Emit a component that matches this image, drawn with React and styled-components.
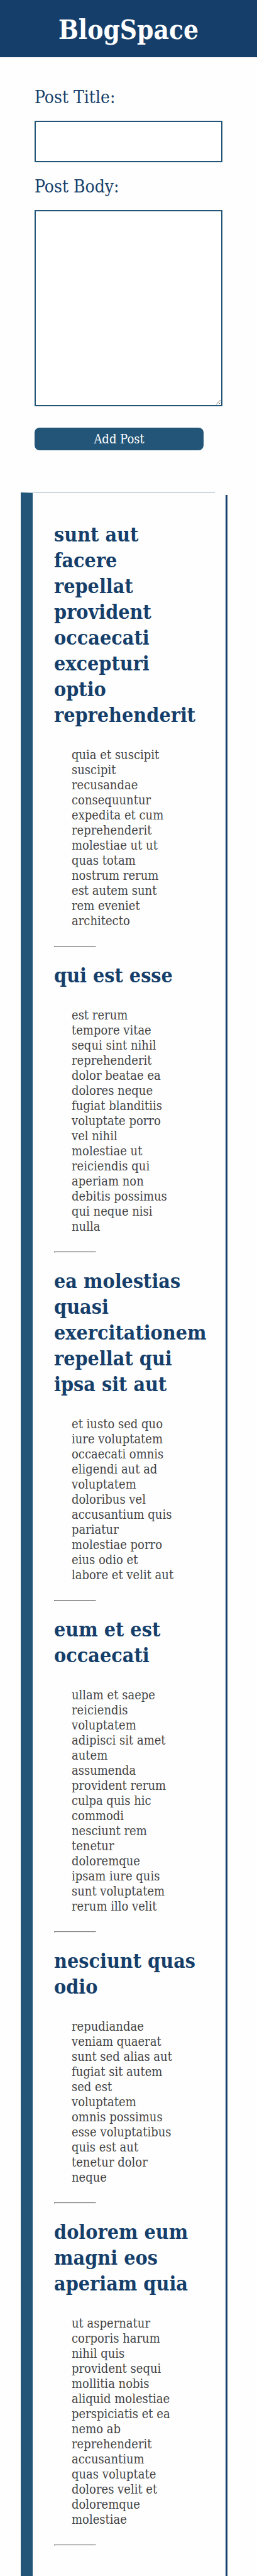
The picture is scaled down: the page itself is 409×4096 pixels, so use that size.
import React from 'react';
import styled, { createGlobalStyle } from 'styled-components';

const GlobalStyle = createGlobalStyle`
  *, *::before, *::after { box-sizing: border-box; }
  body {
    margin: 0;
    background: #fefefe;
    color: #444;
    font-family: "DejaVu Serif Condensed", "DejaVu Serif", serif;
    font-stretch: condensed;
  }
`;

const Header = styled.header`
  display: flex;
  justify-content: center;
  padding: 20px 16px 15px;
  background: #153f6a;
`;

const Brand = styled.h1`
  margin: 0;
  color: #fff;
  font-size: 42px;
  line-height: 56px;
  font-weight: 700;
`;

const PostForm = styled.form`
  display: flex;
  flex-direction: column;
  padding: 46px 55px 0;
`;

const Label = styled.label`
  margin-bottom: 19px;
  color: #153f6a;
  font-size: 28px;
  line-height: 36px;
`;

const TitleInput = styled.input`
  height: 66px;
  margin: 0 0 21px;
  padding: 8px;
  border: 2px solid #225577;
  background: #fff;
  font: inherit;
`;

const BodyInput = styled.textarea`
  height: 312px;
  margin: 0 0 34px;
  padding: 8px;
  border: 2px solid #225577;
  background: #fff;
  font: inherit;
`;

const SubmitButton = styled.button`
  width: 90%;
  height: 36px;
  padding: 0;
  border: 0;
  border-radius: 8px;
  background: #225577;
  color: #fff;
  font-family: inherit;
  font-stretch: inherit;
  font-size: 20px;
  line-height: 24px;
`;

const Main = styled.main`
  display: flex;
  justify-content: space-between;
  margin: 67px 47px 0 33px;
`;

const Feed = styled.section`
  width: 94%;
  padding: 46px 0 23px 34px;
  border-top: 1px solid #a9bfce;
  border-left: 19px solid #225577;
`;

const Rail = styled.div`
  width: 3px;
  margin-top: 4px;
  background: #153f6a;
`;

const PostTitle = styled.h2`
  margin: 0;
  color: #153f6a;
  font-size: 32px;
  line-height: 41px;
  font-weight: 700;
  white-space: pre;
`;

const PostBody = styled.p`
  margin: 30px 0 28px 28px;
  font-size: 20px;
  line-height: 24px;
  white-space: pre;
`;

const Divider = styled.hr`
  width: 67px;
  margin: 0 0 25px;
  border: 1px inset #b4b4b4;
  border-bottom-color: #eee;
  border-right-color: #eee;
`;

const posts = [
  {
    title: 'sunt aut\nfacere\nrepellat\nprovident\noccaecati\nexcepturi\noptio\nreprehenderit',
    body: 'quia et suscipit\nsuscipit\nrecusandae\nconsequuntur\nexpedita et cum\nreprehenderit\nmolestiae ut ut\nquas totam\nnostrum rerum\nest autem sunt\nrem eveniet\narchitecto',
  },
  {
    title: 'qui est esse',
    body: 'est rerum\ntempore vitae\nsequi sint nihil\nreprehenderit\ndolor beatae ea\ndolores neque\nfugiat blanditiis\nvoluptate porro\nvel nihil\nmolestiae ut\nreiciendis qui\naperiam non\ndebitis possimus\nqui neque nisi\nnulla',
  },
  {
    title: 'ea molestias\nquasi\nexercitationem\nrepellat qui\nipsa sit aut',
    body: 'et iusto sed quo\niure voluptatem\noccaecati omnis\neligendi aut ad\nvoluptatem\ndoloribus vel\naccusantium quis\npariatur\nmolestiae porro\neius odio et\nlabore et velit aut',
  },
  {
    title: 'eum et est\noccaecati',
    body: 'ullam et saepe\nreiciendis\nvoluptatem\nadipisci sit amet\nautem\nassumenda\nprovident rerum\nculpa quis hic\ncommodi\nnesciunt rem\ntenetur\ndoloremque\nipsam iure quis\nsunt voluptatem\nrerum illo velit',
  },
  {
    title: 'nesciunt quas\nodio',
    body: 'repudiandae\nveniam quaerat\nsunt sed alias aut\nfugiat sit autem\nsed est\nvoluptatem\nomnis possimus\nesse voluptatibus\nquis est aut\ntenetur dolor\nneque',
  },
  {
    title: 'dolorem eum\nmagni eos\naperiam quia',
    body: 'ut aspernatur\ncorporis harum\nnihil quis\nprovident sequi\nmollitia nobis\naliquid molestiae\nperspiciatis et ea\nnemo ab\nreprehenderit\naccusantium\nquas voluptate\ndolores velit et\ndoloremque\nmolestiae',
  },
];

export default function App() {
  return (
    <>
      <GlobalStyle />
      <Header>
        <Brand>BlogSpace</Brand>
      </Header>
      <PostForm onSubmit={(event) => event.preventDefault()}>
        <Label htmlFor="post-title">Post Title:</Label>
        <TitleInput id="post-title" type="text" />
        <Label htmlFor="post-body">Post Body:</Label>
        <BodyInput id="post-body" />
        <SubmitButton type="submit">Add Post</SubmitButton>
      </PostForm>
      <Main>
        <Feed>
          {posts.map((post) => (
            <article key={post.title}>
              <PostTitle>{post.title}</PostTitle>
              <PostBody>{post.body}</PostBody>
              <Divider />
            </article>
          ))}
        </Feed>
        <Rail />
      </Main>
    </>
  );
}
